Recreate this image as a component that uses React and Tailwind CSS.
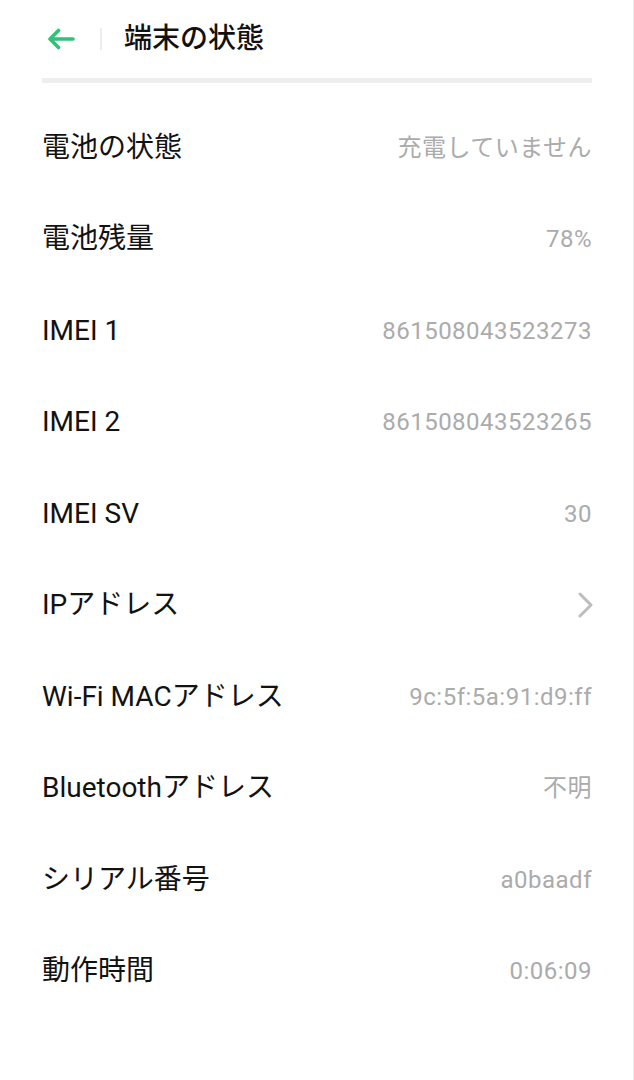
import React from 'react'

const rows = [
  { label: '電池の状態', value: '充電していません' },
  { label: '電池残量', value: '78%' },
  { label: 'IMEI 1', value: '861508043523273' },
  { label: 'IMEI 2', value: '861508043523265' },
  { label: 'IMEI SV', value: '30' },
  { label: 'IPアドレス', chevron: true },
  { label: 'Wi-Fi MACアドレス', value: '9c:5f:5a:91:d9:ff' },
  { label: 'Bluetoothアドレス', value: '不明' },
  { label: 'シリアル番号', value: 'a0baadf' },
  { label: '動作時間', value: '0:06:09' },
]

const font = "font-['Roboto','Noto_Sans_CJK_JP',sans-serif]"

export default function App() {
  return (
    <div className={`w-[634px] h-[1080px] bg-white border-r border-[#ececec] ${font}`}>
      {/* header */}
      <div className="h-[78px] flex items-center pl-[46px]">
        <svg width="30" height="22" viewBox="0 0 30 22" fill="none" stroke="#2dc477" strokeWidth="3.6" strokeLinecap="round" strokeLinejoin="round">
          <path d="M27 11H4M12.5 2.5 4 11l8.5 8.5" />
        </svg>
        <div className="w-[2px] h-[22px] bg-[#ededed] ml-[24px]" />
        <h1 className="ml-[22px] text-[28px] leading-none text-[#111] font-medium">端末の状態</h1>
      </div>
      <div className="ml-[42px] mr-[41px] h-[5px] bg-[#eeeeee]" />
      {/* list */}
      <div className="mt-[19px] pl-[42px] pr-[41px]">
        {rows.map((r) => (
          <div key={r.label} className="h-[91.5px] flex items-center justify-between">
            <span className="text-[28px] text-[#121212] leading-none">{r.label}</span>
            {r.chevron ? (
              <svg width="16" height="26" viewBox="0 0 16 26" fill="none" stroke="#bdbdbd" strokeWidth="3" strokeLinecap="round" strokeLinejoin="round" className="mr-[-1px]">
                <path d="M3 2l11 11L3 24" />
              </svg>
            ) : (
              <span className="text-[24px] text-[#ababab] leading-none tracking-[0.5px]">{r.value}</span>
            )}
          </div>
        ))}
      </div>
    </div>
  )
}
